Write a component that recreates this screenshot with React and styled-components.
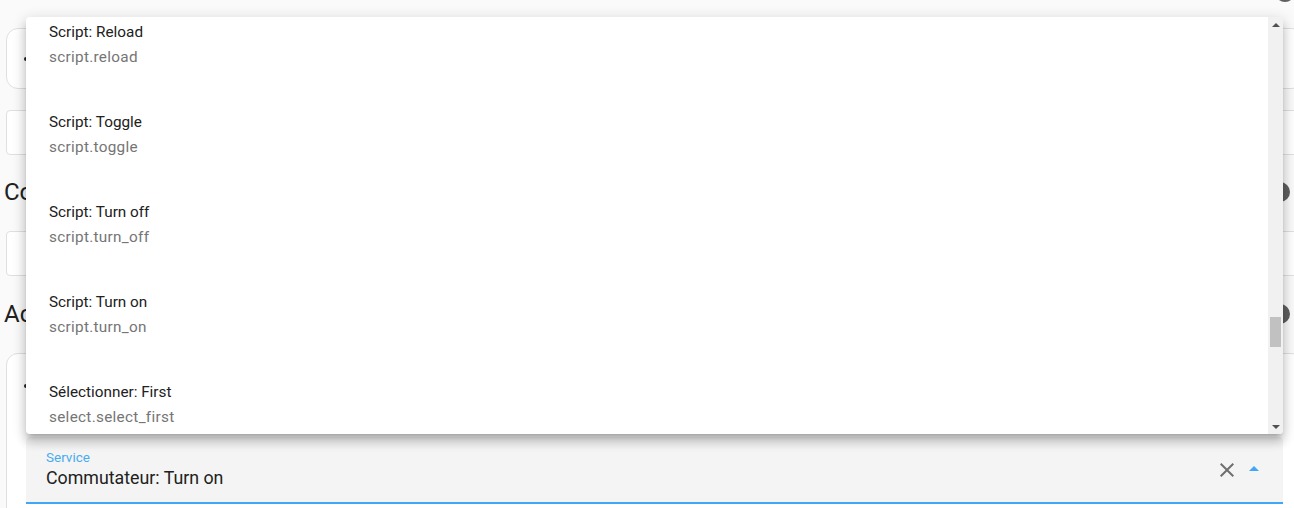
import React from 'react';
import styled, { createGlobalStyle } from 'styled-components';

const Global = createGlobalStyle`
    html, body {
        margin: 0;
        padding: 0;
        background: #fafafa;
        overflow: hidden;
        font-family: Roboto, "Noto Sans", sans-serif;
        color: #212121;
    }
`

const services = [
    ['Automatisation: Reload', 'automation.reload'],
    ['Automatisation: Toggle', 'automation.toggle'],
    ['Automatisation: Trigger', 'automation.trigger'],
    ['Automatisation: Turn off', 'automation.turn_off'],
    ['Automatisation: Turn on', 'automation.turn_on'],
    ['Bouton: Press', 'button.press'],
    ['Commutateur: Toggle', 'switch.toggle'],
    ['Commutateur: Turn off', 'switch.turn_off'],
    ['Commutateur: Turn on', 'switch.turn_on'],
    ['Cover: Close', 'cover.close_cover'],
    ['Cover: Open', 'cover.open_cover'],
    ['Cover: Stop', 'cover.stop_cover'],
    ['Cover: Toggle', 'cover.toggle'],
    ['Home Assistant Core Integration: Check configuration', 'homeassistant.check_config'],
    ['Home Assistant Core Integration: Reload all', 'homeassistant.reload_all'],
    ['Home Assistant Core Integration: Restart', 'homeassistant.restart'],
    ['Home Assistant Core Integration: Stop', 'homeassistant.stop'],
    ['Home Assistant Core Integration: Toggle', 'homeassistant.toggle'],
    ['Home Assistant Core Integration: Turn off', 'homeassistant.turn_off'],
    ['Home Assistant Core Integration: Turn on', 'homeassistant.turn_on'],
    ['Input boolean: Reload', 'input_boolean.reload'],
    ['Input boolean: Toggle', 'input_boolean.toggle'],
    ['Input boolean: Turn off', 'input_boolean.turn_off'],
    ['Input boolean: Turn on', 'input_boolean.turn_on'],
    ['Input number: Decrement', 'input_number.decrement'],
    ['Input number: Increment', 'input_number.increment'],
    ['Input number: Reload', 'input_number.reload'],
    ['Input number: Set', 'input_number.set_value'],
    ['Logger: Set default level', 'logger.set_default_level'],
    ['Logger: Set level', 'logger.set_level'],
    ['Lumière: Toggle', 'light.toggle'],
    ['Lumière: Turn off', 'light.turn_off'],
    ['Lumière: Turn on', 'light.turn_on'],
    ['Notifications: Send a persistent notification', 'notify.persistent_notification'],
    ['Persistent notification: Create', 'persistent_notification.create'],
    ['Persistent notification: Dismiss', 'persistent_notification.dismiss'],
    ['Personne: Reload', 'person.reload'],
    ['Recorder: Disable', 'recorder.disable'],
    ['Recorder: Enable', 'recorder.enable'],
    ['Recorder: Purge', 'recorder.purge'],
    ['Scène: Activate', 'scene.turn_on'],
    ['Scène: Apply', 'scene.apply'],
    ['Scène: Create', 'scene.create'],
    ['Scène: Reload', 'scene.reload'],
    ['Script: Reload', 'script.reload'],
    ['Script: Toggle', 'script.toggle'],
    ['Script: Turn off', 'script.turn_off'],
    ['Script: Turn on', 'script.turn_on'],
    ['Sélectionner: First', 'select.select_first'],
    ['Sélectionner: Last', 'select.select_last'],
    ['Sélectionner: Next', 'select.select_next'],
    ['Sélectionner: Option', 'select.select_option'],
    ['Sélectionner: Previous', 'select.select_previous'],
    ['System Log: Clear', 'system_log.clear'],
    ['System Log: Write', 'system_log.write'],
    ['Text-to-speech (TTS): Clear TTS cache', 'tts.clear_cache'],
    ['Text-to-speech (TTS): Say a TTS message', 'tts.google_translate_say'],
    ['Zone: Reload', 'zone.reload'],
    ['Zone: Create', 'zone.create'],
    ['Zone: Delete', 'zone.delete'],
]

const ITEM_H = 90
const SCROLL = 44 * ITEM_H + 18

const Page = styled.div`
    width: 1298px;
    height: 508px;
    overflow: hidden;
    padding-left: 6px;
    display: flex;
    flex-direction: column;
`

const TopBar = styled.div`
    height: 28px;
    flex-shrink: 0;
    display: flex;
    justify-content: flex-end;
    padding-right: 9px;
`

const HelpDot = styled.div`
    width: 20px;
    height: 20px;
    border-radius: 50%;
    background: #5f5f5f;
    margin-top: ${p => p.$top || 0}px;
`

const Card = styled.div`
    background: #fff;
    border: 1px solid #e0e0e0;
    border-radius: 12px;
    height: ${p => p.$h}px;
    flex-shrink: 0;
    box-sizing: border-box;
    margin-top: ${p => p.$mt || 0}px;
    display: flex;
    flex-direction: column;
`

const CardHeader = styled.div`
    height: ${p => p.$h || 63}px;
    display: flex;
    align-items: center;
    padding-left: 17px;
    flex-shrink: 0;
`

const Handle = styled.div`
    width: 8px;
    height: 4px;
    border-radius: 2px;
    background: #222;
`

const Box = styled.div`
    background: #fff;
    border: 1px solid #e0e0e0;
    border-radius: 4px;
    height: 45px;
    flex-shrink: 0;
    box-sizing: border-box;
    margin-top: ${p => p.$mt}px;
`

const Heading = styled.div`
    margin-top: ${p => p.$mt}px;
    margin-left: -2px;
    height: 32px;
    flex-shrink: 0;
    display: flex;
    align-items: center;
    justify-content: space-between;
    padding-right: 14px;
    font-size: 24px;
    line-height: 32px;
    color: #212121;
`

const CardBody = styled.div`
    padding: 20px 20px 0 19px;
`

const Field = styled.div`
    height: 67px;
    width: 1257px;
    box-sizing: border-box;
    background: #f4f4f4;
    border-bottom: 2px solid #42a5f5;
    border-radius: 4px 4px 0 0;
    display: flex;
    align-items: center;
    padding: 0 17px 0 20px;
`

const FieldText = styled.div`
    flex: 1;
    display: flex;
    flex-direction: column;
    padding-bottom: 1px;
`

const FieldLabel = styled.div`
    font-size: 13.5px;
    line-height: 16px;
    color: #4aabf0;
`

const FieldValue = styled.div`
    font-size: 17.8px;
    line-height: 24px;
    margin-top: 1px;
    color: #212121;
`

const IconBtn = styled.div`
    width: 24px;
    height: 24px;
    display: flex;
    align-items: center;
    justify-content: center;
    margin-left: 3px;
    margin-top: ${p => p.$mt || 0}px;
`

const Dropdown = styled.div`
    position: absolute;
    left: 26px;
    top: 17px;
    width: 1257px;
    height: 417px;
    background: #fff;
    border-radius: 4px;
    overflow: hidden;
    display: flex;
    box-shadow: 0 5px 5px -3px rgba(0,0,0,.2), 0 8px 10px 1px rgba(0,0,0,.14), 0 3px 14px 2px rgba(0,0,0,.12);
`

const List = styled.div`
    flex: 1;
    height: 100%;
    overflow: hidden;
`

const Item = styled.div`
    height: ${ITEM_H}px;
    display: flex;
    flex-direction: column;
    justify-content: center;
    gap: 5px;
    padding-left: 23px;
`

const Primary = styled.div`
    font-size: 15.3px;
    line-height: 20px;
    color: #212121;
`

const Secondary = styled.div`
    font-size: 15.3px;
    line-height: 20px;
    letter-spacing: 0.3px;
    color: #757575;
`

const ScrollBar = styled.div`
    width: 15px;
    height: 100%;
    background: #f1f1f1;
    display: flex;
    flex-direction: column;
`

const ScrollBtn = styled.div`
    height: 15px;
    display: flex;
    align-items: center;
    justify-content: center;
    &::after {
        content: '';
        width: 0;
        height: 0;
        border-left: 4px solid transparent;
        border-right: 4px solid transparent;
        ${p => p.$down
            ? 'border-top: 4px solid #505050;'
            : 'border-bottom: 4px solid #505050;'}
    }
`

const Track = styled.div`
    flex: 1;
    position: relative;
`

const Thumb = styled.div`
    position: absolute;
    left: 2px;
    right: 2px;
    background: #c1c1c1;
`

export default function App() {
    const listRef = React.useRef(null)
    const [thumb, setThumb] = React.useState({ top: 286, height: 30 })

    React.useEffect(() => {
        const el = listRef.current
        if (!el) return
        el.scrollTop = SCROLL
        const track = el.clientHeight - 30
        const height = Math.max(20, Math.round(track * el.clientHeight / el.scrollHeight))
        const top = Math.round((track - height) * el.scrollTop / (el.scrollHeight - el.clientHeight))
        setThumb({ top, height })
    }, [])

    return (
        <>
            <Global />
            <Page>
                <TopBar><HelpDot $top={-18} /></TopBar>
                <Card $h={61}>
                    <CardHeader $h={59}><Handle /></CardHeader>
                </Card>
                <Box $mt={21} />
                <Heading $mt={21}>Conditions<HelpDot /></Heading>
                <Box $mt={23} />
                <Heading $mt={22}>Actions<HelpDot /></Heading>
                <Card $h={200} $mt={23}>
                    <CardHeader><Handle /></CardHeader>
                    <CardBody>
                        <Field>
                            <FieldText>
                                <FieldLabel>Service</FieldLabel>
                                <FieldValue>Commutateur: Turn on</FieldValue>
                            </FieldText>
                            <IconBtn>
                                <svg width="24" height="24" viewBox="0 0 24 24">
                                    <path fill="#6f6f6f" d="M19,6.41L17.59,5L12,10.59L6.41,5L5,6.41L10.59,12L5,17.59L6.41,19L12,13.41L17.59,19L19,17.59L13.41,12L19,6.41Z" />
                                </svg>
                            </IconBtn>
                            <IconBtn $mt={-3}>
                                <svg width="24" height="24" viewBox="0 0 24 24">
                                    <path fill="#42a5f5" d="M7,15L12,10L17,15H7Z" />
                                </svg>
                            </IconBtn>
                        </Field>
                    </CardBody>
                </Card>
            </Page>
            <Dropdown>
                <List ref={listRef}>
                    {services.map(([name, id]) => (
                        <Item key={id}>
                            <Primary>{name}</Primary>
                            <Secondary>{id}</Secondary>
                        </Item>
                    ))}
                </List>
                <ScrollBar>
                    <ScrollBtn />
                    <Track>
                        <Thumb style={{ top: thumb.top, height: thumb.height }} />
                    </Track>
                    <ScrollBtn $down />
                </ScrollBar>
            </Dropdown>
        </>
    )
}
